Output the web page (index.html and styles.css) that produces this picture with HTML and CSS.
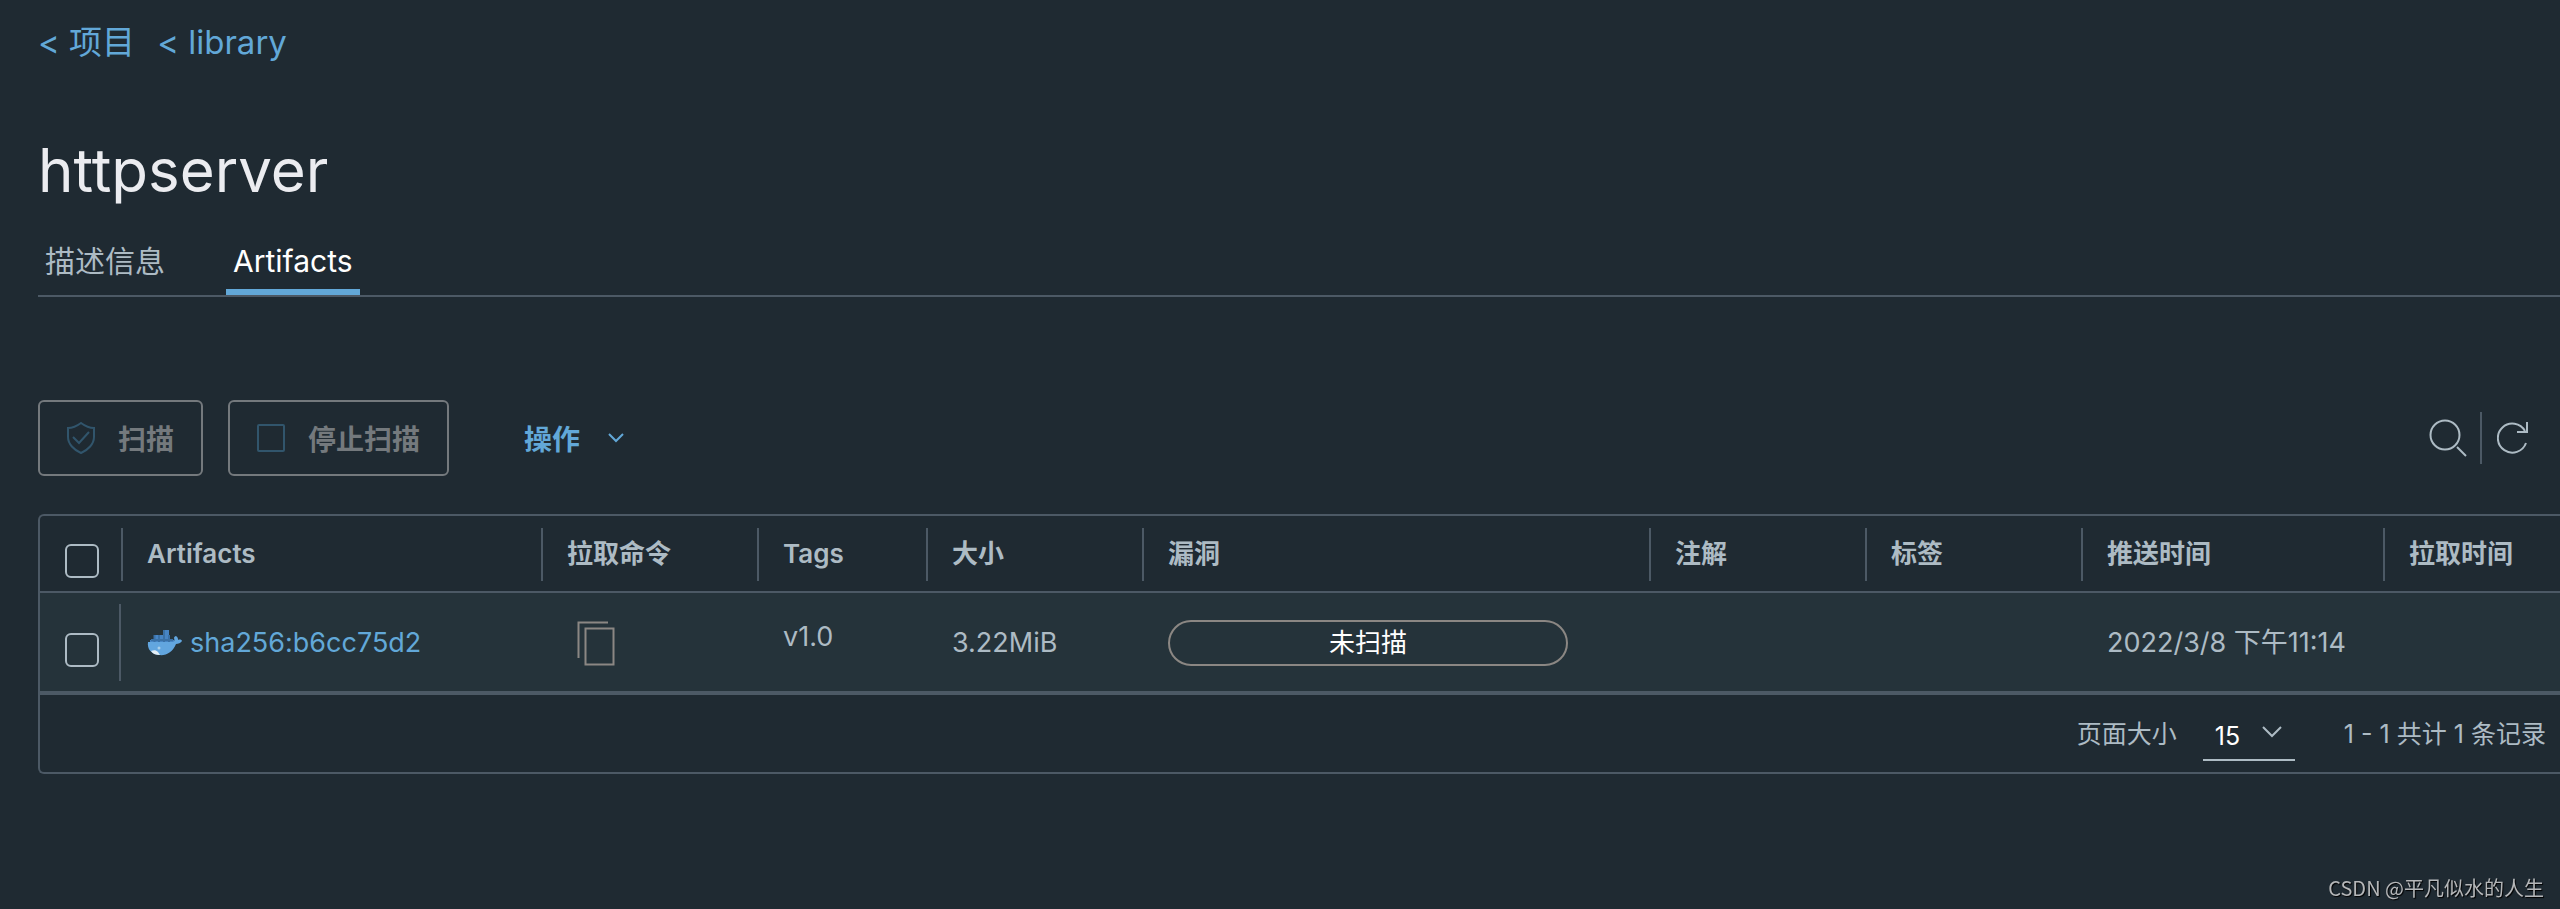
FILE: index.html
```html
<!DOCTYPE html>
<html lang="zh-CN">
<head>
  <meta charset="UTF-8">
  <title>httpserver</title>
  <link rel="stylesheet" href="styles.css">
</head>
<body>
  <main class="page">
    <nav class="breadcrumb">
      <a href="#">&lt; 项目</a>
      <a href="#">&lt; library</a>
    </nav>

    <h1 class="title">httpserver</h1>

    <nav class="tabs">
      <a class="tab" href="#">描述信息</a>
      <a class="tab active" href="#">Artifacts</a>
    </nav>

    <div class="toolbar">
      <button class="btn" disabled>
        <svg class="icon" width="28" height="32" viewBox="0 0 28 32"><path d="M14 1 C10 4 6 6 1 6 V15 C1 22 7 28 14 31 C21 28 27 22 27 15 V6 C22 6 18 4 14 1 Z M6 15 L12 21 L22 10"/></svg>
        扫描
      </button>
      <button class="btn" disabled>
        <svg class="icon" width="28" height="32" viewBox="0 0 28 32"><rect x="1" y="3" width="26" height="26" rx="1"/></svg>
        停止扫描
      </button>
      <button class="btn-action">
        操作
        <svg width="16" height="10" viewBox="0 0 16 10"><path d="M1 1 L8 8 L15 1"/></svg>
      </button>
      <div class="tools">
        <button class="tool" aria-label="搜索">
          <svg width="40" height="40" viewBox="0 0 40 40"><circle cx="17" cy="17" r="14.5"/><path d="M29 29 L38 38"/></svg>
        </button>
        <button class="tool refresh" aria-label="刷新">
          <svg width="32" height="34" viewBox="0 0 32 34"><path d="M29 22 A14.500 14.500 0 1 1 28 10 M30 1 V11 H20"/></svg>
        </button>
      </div>
    </div>

    <div class="datagrid">
      <table>
        <colgroup>
          <col class="col-check"><col class="col-name"><col class="col-md"><col class="col-sm"><col class="col-md">
          <col class="col-scan"><col class="col-md"><col class="col-md"><col class="col-time"><col>
        </colgroup>
        <thead>
          <tr>
            <th><div class="check"><input type="checkbox" aria-label="全选"></div></th>
            <th><div class="head">Artifacts</div></th>
            <th><div class="head">拉取命令</div></th>
            <th><div class="head">Tags</div></th>
            <th><div class="head">大小</div></th>
            <th><div class="head">漏洞</div></th>
            <th><div class="head">注解</div></th>
            <th><div class="head">标签</div></th>
            <th><div class="head">推送时间</div></th>
            <th><div class="head">拉取时间</div></th>
          </tr>
        </thead>
        <tbody>
          <tr>
            <td><div class="check"><input type="checkbox" aria-label="选择"></div></td>
            <td>
              <div class="cell">
                <a class="artifact" href="#">
                  <svg width="35" height="26" viewBox="0 0 35 26">
                    <path fill="#4785c4" d="M17 0h5v5h-5zM7 5h15v5H7zM3 10h24v4H3z"/>
                    <path stroke="#3a71a6" d="M7.500 5v9M12 5v9M17 0v14M22 5v9M4 10h22" fill="none"/>
                    <path fill="#62a6df" d="M1 12H25C27 12 28 11 27 8C27 7 28 6 29 6C31 7 31 9 31 10C33 9 35 10 35 11C34 13 31 14 29 14C26 22 19 26 12 25C4 24 0 19 1 12Z"/>
                    <path fill="#e4eef5" d="M4 21C7 20 9 20 11 22L13 25C9 25 6 24 4 21Z"/>
                    <circle cx="12" cy="18" r="1.500" fill="#a9cfea"/>
                  </svg>
                  sha256:b6cc75d2
                </a>
              </div>
            </td>
            <td>
              <div class="cell">
                <button class="copy" aria-label="复制拉取命令">
                  <svg width="40" height="46" viewBox="0 0 40 46"><path d="M2.500 38 V2.500 H32"/><rect x="9.500" y="8.500" width="28" height="36"/></svg>
                </button>
              </div>
            </td>
            <td><div class="cell tag">v1.0</div></td>
            <td><div class="cell">3.22MiB</div></td>
            <td><div class="cell"><span class="scan-status">未扫描</span></div></td>
            <td></td>
            <td></td>
            <td><div class="cell">2022/3/8 下午11:14</div></td>
            <td></td>
          </tr>
        </tbody>
      </table>
      <div class="grid-footer">
        <label for="page-size">页面大小</label>
        <div class="select-wrap">
          <select id="page-size">
            <option>15</option>
            <option>25</option>
            <option>50</option>
          </select>
          <svg width="20" height="12" viewBox="0 0 20 12"><path d="M1 1 L10 10 L19 1"/></svg>
        </div>
        <span>1 - 1 共计 1 条记录</span>
      </div>
    </div>
  </main>
  <div class="watermark">CSDN @平凡似水的人生</div>
</body>
</html>
```
FILE: styles.css
```css
* {
  box-sizing: border-box;
}
body {
  margin: 0;
  background: #1f2a32;
  color: #adbbc4;
  font-family: Inter, "Noto Sans CJK SC", sans-serif;
  font-size: 27px;
  line-height: 36px;
  overflow-x: hidden;
}
a {
  color: #62a8d8;
  text-decoration: none;
}
button {
  background: none;
  border: none;
  padding: 0;
  font-family: inherit;
  cursor: pointer;
}
svg {
  display: block;
  flex: none;
  fill: none;
  stroke: currentColor;
  stroke-width: 2;
}
.page {
  padding: 20px 0 0 38px;
}
.breadcrumb {
  display: flex;
  gap: 22px;
  font-size: 33px;
  line-height: 44px;
}
.title {
  margin: 64px 0 0;
  color: #ebecf0;
  font-size: 60px;
  font-weight: 400;
  line-height: 84px;
}
.tabs {
  display: flex;
  gap: 54px;
  margin-top: 22px;
  border-bottom: 2px solid #4c5965;
}
.tab {
  padding: 9px 7px 16px;
  color: #adbbc4;
  font-size: 30px;
  line-height: 36px;
}
.tab.active {
  color: #fff;
  box-shadow: inset 0 -6px #62a8d8;
}

/* toolbar */
.toolbar {
  display: flex;
  align-items: center;
  gap: 25px;
  margin-top: 103px;
}
.btn {
  display: flex;
  align-items: center;
  gap: 23px;
  height: 76px;
  padding: 0 27px;
  border: 2px solid #74797d;
  border-radius: 6px;
  color: #74797d;
  font-size: 28px;
  font-weight: 600;
}
.btn .icon {
  color: #31556c;
}
.btn-action {
  display: flex;
  align-items: center;
  gap: 28px;
  margin-left: 50px;
  color: #62a8d8;
  font-size: 28px;
  font-weight: 600;
}
.tools {
  display: flex;
  align-items: center;
  margin-left: auto;
  padding-right: 31px;
}
.tool {
  padding-right: 12px;
  color: #adbbc4;
}
.refresh {
  padding: 9px 0 9px 15px;
  border-left: 2px solid #4c5965;
}

/* datagrid */
.datagrid {
  margin-top: 38px;
  border: 2px solid #4c5965;
  border-right: none;
  border-radius: 6px 0 0 6px;
}
table {
  width: 100%;
  table-layout: fixed;
  border-spacing: 0;
}
.col-check { width: 81px; }
.col-name { width: 420px; }
.col-sm { width: 169px; }
.col-md { width: 216px; }
.col-scan { width: 507px; }
.col-time { width: 302px; }
th, td {
  padding: 0;
  text-align: left;
  white-space: nowrap;
}
th {
  padding: 12px 0 10px;
  border-bottom: 2px solid #4c5965;
  font-size: 26px;
  font-weight: 600;
}
td {
  padding: 11px 0 10px;
  background: #25333a;
  border-bottom: 4px solid #4c5965;
}
.head {
  height: 53px;
  padding: 8px 0 0 24px;
  border-left: 2px solid #4c5965;
}
.cell {
  display: flex;
  align-items: center;
  height: 77px;
  padding-left: 26px;
}
.check {
  display: flex;
  align-items: center;
  padding-left: 25px;
}
th .check {
  height: 53px;
  padding-top: 12px;
}
td .check {
  height: 77px;
  padding-top: 14px;
  border-right: 2px solid #4c5965;
}
input[type="checkbox"] {
  appearance: none;
  width: 34px;
  height: 34px;
  margin: 0;
  border: 2px solid #adbbc4;
  border-radius: 6px;
}
.artifact {
  display: flex;
  align-items: center;
  gap: 8px;
}
.artifact svg {
  stroke: none;
}
.copy {
  padding-left: 9px;
  color: #8b8783;
}
.tag {
  padding-bottom: 12px;
}
.scan-status {
  width: 400px;
  height: 46px;
  border: 2px solid #8b8783;
  border-radius: 23px;
  color: #fff;
  font-size: 26px;
  line-height: 42px;
  text-align: center;
}
.grid-footer {
  display: flex;
  align-items: center;
  justify-content: flex-end;
  height: 77px;
  padding-right: 14px;
  font-size: 25px;
}
.select-wrap {
  position: relative;
  margin: 4px 49px 0 26px;
}
select {
  appearance: none;
  width: 92px;
  height: 50px;
  padding: 2px 12px 0;
  background: none;
  border: none;
  border-bottom: 2px solid #adbbc4;
  border-radius: 0;
  color: #fff;
  font-family: inherit;
  font-size: 25px;
}
.select-wrap svg {
  position: absolute;
  top: 15px;
  right: 13px;
  pointer-events: none;
}
.watermark {
  position: fixed;
  right: 16px;
  bottom: 6px;
  color: #b5b7b9;
  font-family: "Noto Sans CJK SC", sans-serif;
  font-size: 20px;
  font-weight: 400;
  line-height: 30px;
  text-shadow: 1px 1px 1px #000;
}
```
